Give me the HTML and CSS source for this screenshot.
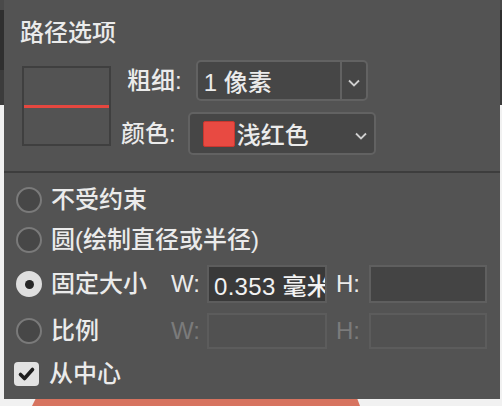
FILE: index.html
```html
<!DOCTYPE html>
<html lang="zh-CN">
<head>
<meta charset="utf-8">
<title>路径选项</title>
<link rel="stylesheet" href="styles.css">
</head>
<body>
<div class="stage">
  <div class="panel">
    <div class="top">
      <div class="title">路径选项</div>
      <div class="stroke-row">
        <div class="preview"><div class="line"></div></div>
        <div class="fields">
          <div class="field f1">
            <span class="lbl">粗细:</span>
            <div class="select s1">
              <span class="val">1 像素</span>
              <span class="arrow"><svg width="12" height="8" viewBox="0 0 12 8"><path d="M1 1.5 L6 6.5 L11 1.5" fill="none" stroke="#cfcfcf" stroke-width="1.8"/></svg></span>
            </div>
          </div>
          <div class="field f2">
            <span class="lbl">颜色:</span>
            <div class="select s2">
              <span class="swatch"></span>
              <span class="val">浅红色</span>
              <span class="arrow"><svg width="12" height="8" viewBox="0 0 12 8"><path d="M1 1.5 L6 6.5 L11 1.5" fill="none" stroke="#cfcfcf" stroke-width="1.8"/></svg></span>
            </div>
          </div>
        </div>
      </div>
    </div>
    <div class="sep"></div>
    <div class="opts">
      <div class="opt r1"><span class="radio"></span><span class="txt">不受约束</span></div>
      <div class="opt r2"><span class="radio"></span><span class="txt">圆(绘制直径或半径)</span></div>
      <div class="opt r3">
        <div class="grp"><span class="radio on"></span><span class="txt">固定大小</span></div>
        <span class="wl">W:</span>
        <div class="inp active"><span class="ival">0.353 毫米</span></div>
        <span class="hl">H:</span>
        <div class="inp hin"></div>
      </div>
      <div class="opt r4">
        <div class="grp"><span class="radio"></span><span class="txt">比例</span></div>
        <span class="wl dis">W:</span>
        <div class="inp off"></div>
        <span class="hl dis">H:</span>
        <div class="inp off"></div>
      </div>
      <div class="opt r5">
        <span class="check"><svg width="25" height="24" viewBox="0 0 25 24"><path d="M6.5 12.5 L10.5 16.5 L18.5 7.5" fill="none" stroke="#1e1e1e" stroke-width="3.6" stroke-linecap="round" stroke-linejoin="round"/></svg></span>
        <span class="txt">从中心</span>
      </div>
    </div>
  </div>
  <div class="salmon"></div>
</div>
</body>
</html>
```
FILE: styles.css
```css
* { box-sizing: border-box; }
html, body { margin: 0; padding: 0; }
body {
  width: 502px;
  height: 406px;
  overflow: hidden;
  font-family: "Liberation Sans", "Noto Sans CJK SC", sans-serif;
  font-size: 24px;
  font-weight: 500;
  color: #ebebeb;
  background: linear-gradient(to bottom, #4a4a4a 0 10px, #2f2f2f 10px 70px, #3c3c3c 70px 105px, #f1f1f1 105px);
}
.stage { position: relative; width: 502px; height: 406px; }
.salmon {
  position: absolute;
  left: 32px;
  top: 398px;
  width: 328px;
  height: 8px;
  background: #d7735f;
  clip-path: polygon(4px 0, 325px 0, 328px 100%, 0 100%);
}
.panel {
  position: relative;
  z-index: 1;
  margin-left: 4px;
  width: 496px;
  height: 399px;
  background: #535353;
}
.top { padding: 18px 0 0 18px; }
.title { line-height: 30px; margin-left: -2px; }
.stroke-row { display: flex; margin-top: 12px; }
.preview {
  margin-top: 6px;
  width: 89px;
  height: 80px;
  border: 2px solid #3f3f3f;
}
.preview .line { margin-top: 37px; height: 3px; background: #e5473f; }
.fields { margin-left: 10px; display: flex; flex-direction: column; gap: 11px; }
.field { display: flex; align-items: center; }
.f1 { padding-left: 6px; height: 41px; }
.f2 { height: 43px; }
.f1 .lbl { margin-right: 14px; }
.f2 .lbl { margin-right: 12px; }
.lbl { line-height: 30px; }
.select {
  display: flex;
  align-items: center;
  border: 2px solid #626262;
  border-radius: 5px;
  background: #464646;
  height: 100%;
}
.s1 { width: 172px; }
.s2 { width: 188px; padding-left: 13px; }
.s1 .val { flex: 1; padding-left: 6px; }
.s1 .arrow {
  width: 26px;
  height: 100%;
  border-left: 2px solid #626262;
  display: flex;
  align-items: center;
  justify-content: center;
}
.s1 .arrow svg { margin-top: 4px; }
.swatch {
  width: 32px;
  height: 26px;
  background: #e84a42;
  border-radius: 2px;
  border: 1px solid #c9372f;
  margin-right: 2px;
}
.s2 .val { flex: 1; }
.s2 .arrow { display: flex; margin-right: 7px; margin-top: 4px; }
.sep { height: 2px; background: #3d3d3d; margin-top: 16px; }
.opts { padding-top: 7px; }
.opt { display: flex; align-items: center; padding-left: 12px; height: 40px; }
.r3 { height: 48px; }
.r4 { height: 46px; }
.r5 { height: 40px; padding-left: 10px; }
.radio {
  width: 26px;
  height: 26px;
  border-radius: 50%;
  border: 2px solid #7a7a7a;
  background: #474747;
  flex: none;
  display: flex;
  align-items: center;
  justify-content: center;
}
.radio.on { background: #dedede; border-color: #dedede; }
.radio.on::after {
  content: "";
  width: 9px;
  height: 9px;
  border-radius: 50%;
  background: #262626;
}
.txt { margin-left: 9px; line-height: 30px; white-space: nowrap; }
.grp { display: flex; align-items: center; width: 155px; }
.wl { width: 36px; }
.hl { width: 33px; margin-left: 9px; }
.dis { color: #7b7b7b; }
.inp {
  width: 120px;
  height: 38px;
  border: 2px solid #5f5f5f;
  background: #454545;
  overflow: hidden;
  white-space: nowrap;
  display: flex;
  align-items: center;
}
.inp.active { background: #393939; border-color: #5d5d5d; }
.hin { width: 118px; background: #444; }
.inp.off { height: 36px; background: #515151; border-color: #5c5c5c; }
.r4 .inp.off:last-child { width: 118px; }
.ival { padding-left: 5px; color: #f2f2f2; letter-spacing: 0.3px; }
.check {
  width: 25px;
  height: 24px;
  border-radius: 4px;
  background: #e2e2e2;
  flex: none;
  display: flex;
}
.r5 .txt { margin-left: 10px; }
```
